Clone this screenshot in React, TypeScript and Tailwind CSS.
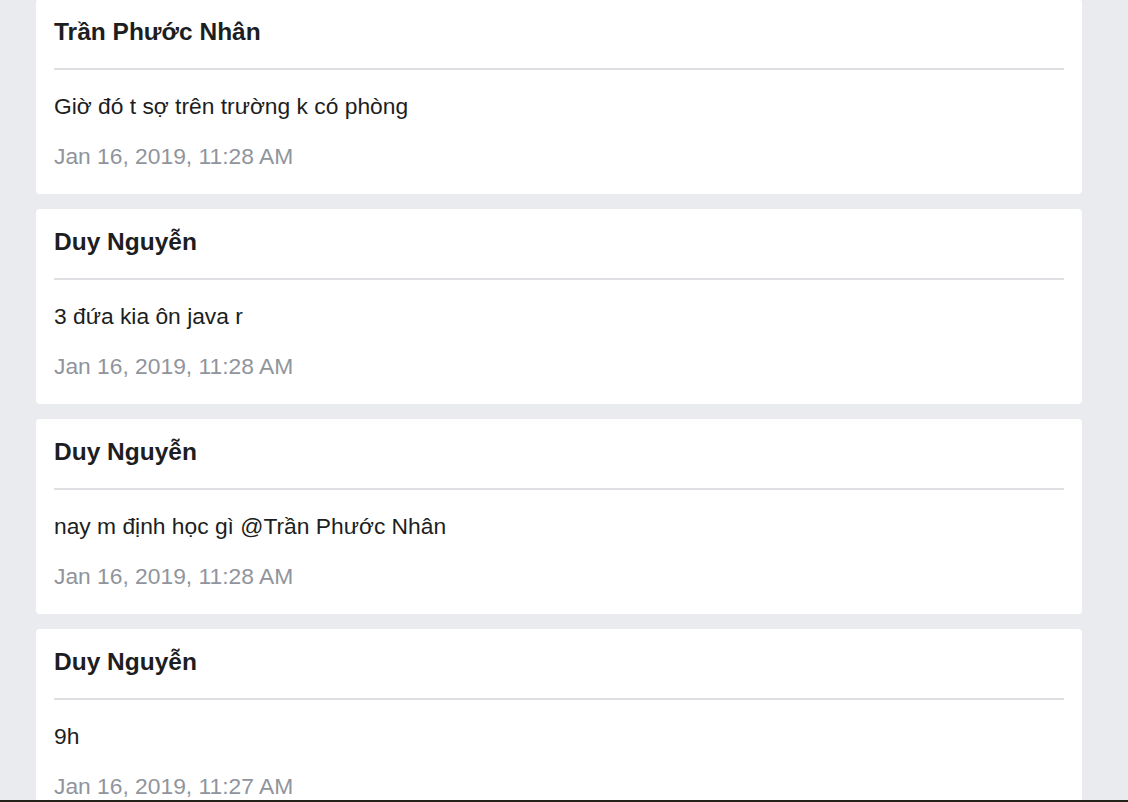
import React from 'react';

type Message = {
    author: string;
    text: string;
    time: string;
};

const messages: Message[] = [
    { author: 'Trần Phước Nhân', text: 'Giờ đó t sợ trên trường k có phòng', time: 'Jan 16, 2019, 11:28 AM' },
    { author: 'Duy Nguyễn', text: '3 đứa kia ôn java r', time: 'Jan 16, 2019, 11:28 AM' },
    { author: 'Duy Nguyễn', text: 'nay m định học gì @Trần Phước Nhân', time: 'Jan 16, 2019, 11:28 AM' },
    { author: 'Duy Nguyễn', text: '9h', time: 'Jan 16, 2019, 11:27 AM' },
];

function MessageCard({ author, text, time }: Message) {
    return (
        <div className="bg-white rounded-[4px] pt-[15px] pb-[20px] px-[18px]">
            <h3 className="text-[24.5px] leading-[36px] font-bold text-[#1c1e21]">{author}</h3>
            <div className="mt-[18px] h-[2px] bg-[#dddfe2]"></div>
            <p className="mt-[18px] text-[22.8px] leading-[36px] text-[#1c1e21]">{text}</p>
            <p className="mt-[14px] text-[22.8px] leading-[36px] text-[#90949c]">{time}</p>
        </div>
    );
}

export default function App() {
    return (
        <div className="h-[802px] flex flex-col bg-[#e9ebee] overflow-hidden font-['Liberation_Sans',Arial,sans-serif]">
            <div className="flex-1 overflow-hidden">
                <div className="-mt-px ml-[36px] w-[1046px] flex flex-col gap-[15px]">
                    {messages.map((m, idx) => (
                        <MessageCard key={idx} {...m} />
                    ))}
                </div>
            </div>
            <div className="h-[2px] bg-[#23231b]"></div>
        </div>
    );
}
